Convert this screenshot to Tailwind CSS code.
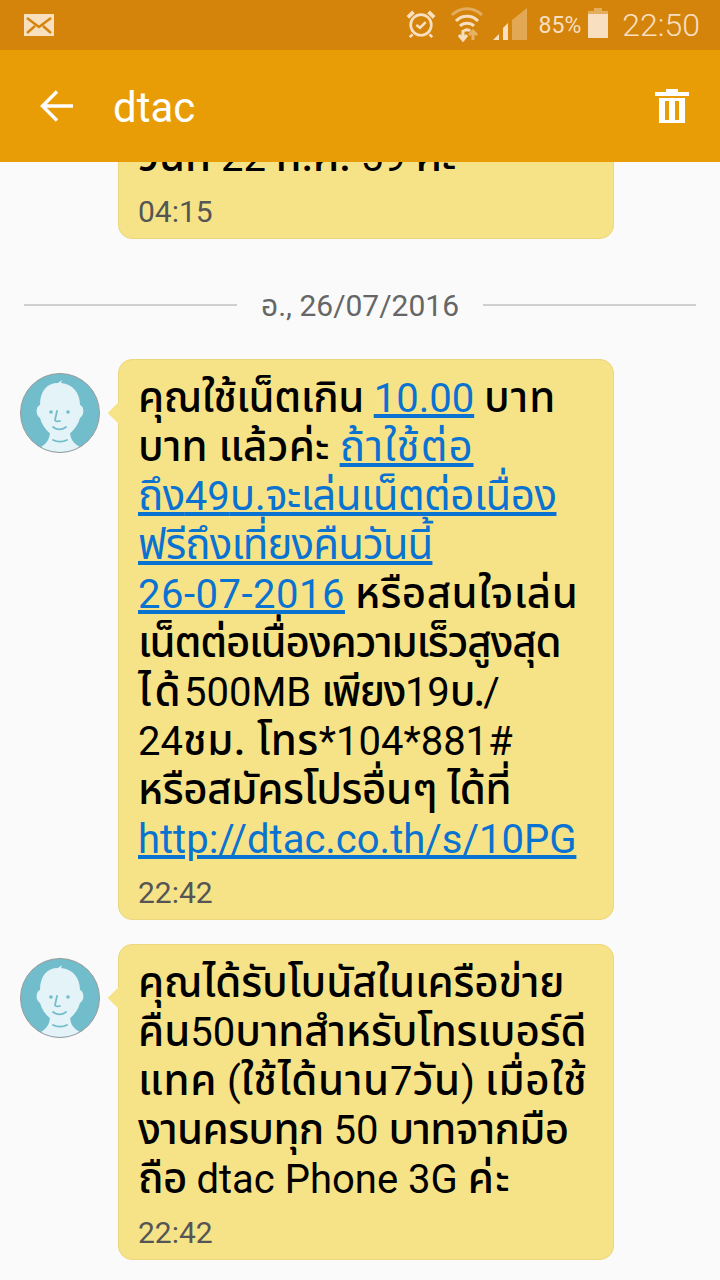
<!DOCTYPE html>
<html lang="th">
<head>
  <meta charset="UTF-8" />
  <meta name="viewport" content="width=device-width, initial-scale=1.0"/>
  <title>dtac</title>
  <script src="https://cdn.jsdelivr.net/npm/@tailwindcss/browser@4"></script>
</head>
<body class="bg-[#fafafa] font-['Roboto','Noto_Sans','Noto_Sans_Thai','Noto_Sans_CJK_SC',sans-serif] w-[720px] h-[1280px] overflow-hidden">

  <!-- Status bar -->
  <div class="h-[50px] bg-[#d4840b] flex items-center pl-[24px] pr-[20px] text-[#f7dfc0]">
    <svg width="30" height="22" viewBox="0 0 30 22"><rect width="30" height="22" fill="#f7dfc0"/><path d="M3 4l12 9 12-9M3 19l8-7M27 19l-8-7" stroke="#d4840b" stroke-width="2.4" fill="none"/></svg>
    <div class="ml-auto flex items-center">
      <svg class="mb-[3px]" width="30" height="30" viewBox="0 0 32 32" fill="none" stroke="#f7dfc0" stroke-width="2.8"><circle cx="16" cy="17" r="11"/><path d="M11 17l4 3 6-6"/><path d="M2 9l6-6M30 9l-6-6" stroke-width="4"/><path d="M7 27l-3 3M25 27l3 3"/></svg>
      <svg class="ml-[14px] mb-[3px]" width="34" height="36" viewBox="0 0 34 36" fill="none"><path d="M2 9a21 21 0 0 1 30 0" stroke="#f7dfc0" stroke-opacity=".45" stroke-width="3"/><path d="M6 15a15 15 0 0 1 22 0M10 20a10 10 0 0 1 14 0" stroke="#f7dfc0" stroke-width="3"/><path d="M14 25a4 4 0 0 1 6 0" stroke="#f7dfc0" stroke-width="3"/><path d="M13 24v8M9 29l4 5 4-5" stroke="#f7dfc0" stroke-width="3"/><path d="M23 34v-8M19 29l4-4 4 4" stroke="#f7dfc0" stroke-opacity=".5" stroke-width="3"/></svg>
      <svg class="ml-[9px] mb-[3px]" width="34" height="32" viewBox="0 0 34 32"><path d="M0 32l6-6v6z" fill="#f7dfc0"/><path d="M10 32v-12l5-5v17z" fill="#f7dfc0"/><path d="M19 32v-20l15-12v32z" fill="#f7dfc0" fill-opacity=".4"/></svg>
      <span class="ml-[12px] text-[23px] leading-none">85%</span>
      <svg class="ml-[7px] mb-[4px]" width="20" height="30" viewBox="0 0 20 30"><path d="M6 0h8v3h6v3H0V3h6z" fill="#f7dfc0" fill-opacity=".45"/><rect y="6" width="20" height="24" fill="#f7dfc0"/></svg>
      <span class="ml-[14px] text-[32px] font-light leading-none">22:50</span>
    </div>
  </div>

  <!-- Toolbar -->
  <header class="relative z-10 h-[112px] bg-[#e89d06] flex items-center text-white pl-[40px] pr-[31px]">
    <svg width="33" height="32" viewBox="0 0 33 32" fill="none" stroke="#fff" stroke-width="3.4"><path d="M33 16H3M17 1.500L2.500 16 17 30.500"/></svg>
    <h1 class="ml-[40px] text-[42px] leading-none pt-[4px]">dtac</h1>
    <svg class="ml-auto mb-[1px]" width="34" height="34" viewBox="0 0 34 34" fill="#fff"><path d="M11 0h12v3h11v4H0V3h11z"/><path d="M4 9h26v25H4zM10 12v19h4V12zM20 12v19h4V12z" fill-rule="evenodd"/></svg>
  </header>

  <!-- Messages -->
  <main class="h-[1118px] overflow-hidden">
    <div class="ml-[118px] w-[496px] -mt-[40px] h-[117px] bg-[#f6e387] border border-[#ecd77c] rounded-[14px] pl-[19px] pt-[10px]">
      <p class="text-[40px] leading-[49px] text-black whitespace-nowrap"><span class="text-[42px] font-medium leading-none">วันที่</span> 22 <span class="text-[42px] font-medium leading-none">ก.ค.</span> 59 <span class="text-[42px] font-medium leading-none">ค่ะ</span></p>
      <p class="mt-[12px] text-[30px] leading-[36px] text-[#555]">04:15</p>
    </div>

    <div class="flex items-center mt-[49px] px-[24px] h-[36px]">
      <div class="flex-1 h-[2px] bg-[#cfcfcf] -mt-[2px]"></div>
      <span class="px-[24px] text-[30px] text-[#666] leading-none">อ., 26/07/2016</span>
      <div class="flex-1 h-[2px] bg-[#cfcfcf] -mt-[2px]"></div>
    </div>

    <div class="flex mt-[35px] pl-[20px]">
      <svg class="mt-[14px]" width="80" height="80" viewBox="0 0 80 80"><defs><clipPath id="a"><circle cx="40" cy="40" r="39"/></clipPath></defs><circle cx="40" cy="40" r="39.500" fill="#72bdcb" stroke="#9a9a9a"/><g clip-path="url(#a)" fill="#e4f3f7"><path d="M30 58C30 66 27 70 21 74L30 82H50L60 74C53 70 50 66 50 58Z"/><path d="M20 32C20 18 27 10 38 10L42 7 41 10C53 11 60 20 60 32 64 33 65 42 60 45 57 56 48 64 40 64 32 64 23 56 20 45 15 42 16 33 20 32Z"/></g><circle cx="31" cy="39" r="1.800" fill="#72bdcb"/><circle cx="48" cy="39" r="1.800" fill="#72bdcb"/><path d="M37 38l-2 9c0 1 2 2 5 1M33 54c4 3 9 3 13 0M33 67c4 2 10 2 14 0" fill="none" stroke="#72bdcb" stroke-width="1.800" stroke-linecap="round"/></svg>
      <div class="relative ml-[18px] w-[496px] h-[561px] bg-[#f6e387] border border-[#ecd77c] rounded-[14px] pl-[19px] pt-[14px]">
        <div class="absolute -left-[8px] top-[45px] w-[16px] h-[16px] rotate-45 bg-[#f6e387]"></div>
        <div class="relative text-[40px] leading-[49px] text-black whitespace-nowrap">
          <p><span class="text-[42px] font-medium leading-none tracking-[-0.5px]">คุณใช้เน็ตเกิน</span> <a class="text-[#0a72d1] underline">10.00</a> <span class="text-[42px] font-medium leading-none tracking-[1px]">บาท</span></p>
          <p><span class="text-[42px] font-medium leading-none tracking-[0.2px]">บาท แล้วค่ะ</span> <a class="text-[#0a72d1] underline"><span class="text-[42px] leading-none tracking-[1px]">ถ้าใช้ต่อ</span></a></p>
          <p><a class="text-[#0a72d1] underline"><span class="text-[42px] leading-none tracking-[-0.5px]">ถึง</span>49<span class="text-[42px] leading-none tracking-[-0.5px]">บ.จะเล่นเน็ตต่อเนื่อง</span></a></p>
          <p><a class="text-[#0a72d1] underline"><span class="text-[42px] leading-none tracking-[-0.9px]">ฟรีถึงเที่ยงคืนวันนี้</span></a></p>
          <p><a class="text-[#0a72d1] underline tracking-[0.5px]">26-07-2016</a> <span class="text-[42px] font-medium leading-none tracking-[0.5px]">หรือสนใจเล่น</span></p>
          <p><span class="text-[42px] font-medium leading-none tracking-[-1.2px]">เน็ตต่อเนื่องความเร็วสูงสุด</span></p>
          <p><span class="text-[42px] font-medium leading-none tracking-[3.5px]">ได้</span>500MB <span class="text-[42px] font-medium leading-none tracking-[-1.6px]">เพียง</span>19<span class="text-[42px] font-medium leading-none tracking-[-2px]">บ.</span>/</p>
          <p>24<span class="text-[42px] font-medium leading-none tracking-[0.5px]">ชม. โทร</span>*104*881#</p>
          <p><span class="text-[42px] font-medium leading-none tracking-[-0.35px]">หรือสมัครโปรอื่นๆ ได้ที่</span></p>
          <p><a class="text-[#0a72d1] underline">http://dtac.co.th/s/10PG</a></p>
        </div>
        <p class="mt-[11px] text-[30px] leading-[36px] text-[#555]">22:42</p>
      </div>
    </div>

    <div class="flex mt-[24px] pl-[20px]">
      <svg class="mt-[14px]" width="80" height="80" viewBox="0 0 80 80"><defs><clipPath id="b"><circle cx="40" cy="40" r="39"/></clipPath></defs><circle cx="40" cy="40" r="39.500" fill="#72bdcb" stroke="#9a9a9a"/><g clip-path="url(#b)" fill="#e4f3f7"><path d="M30 58C30 66 27 70 21 74L30 82H50L60 74C53 70 50 66 50 58Z"/><path d="M20 32C20 18 27 10 38 10L42 7 41 10C53 11 60 20 60 32 64 33 65 42 60 45 57 56 48 64 40 64 32 64 23 56 20 45 15 42 16 33 20 32Z"/></g><circle cx="31" cy="39" r="1.800" fill="#72bdcb"/><circle cx="48" cy="39" r="1.800" fill="#72bdcb"/><path d="M37 38l-2 9c0 1 2 2 5 1M33 54c4 3 9 3 13 0M33 67c4 2 10 2 14 0" fill="none" stroke="#72bdcb" stroke-width="1.800" stroke-linecap="round"/></svg>
      <div class="relative ml-[18px] w-[496px] h-[316px] bg-[#f6e387] border border-[#ecd77c] rounded-[14px] pl-[19px] pt-[14px]">
        <div class="absolute -left-[8px] top-[45px] w-[16px] h-[16px] rotate-45 bg-[#f6e387]"></div>
        <div class="relative text-[40px] leading-[49px] text-black whitespace-nowrap">
          <p><span class="text-[42px] font-medium leading-none tracking-[-0.1px]">คุณได้รับโบนัสในเครือข่าย</span></p>
          <p><span class="text-[42px] font-medium leading-none">คืน</span>50<span class="text-[42px] font-medium leading-none tracking-[-0.1px]">บาทสำหรับโทรเบอร์ดี</span></p>
          <p><span class="text-[42px] font-medium leading-none tracking-[0.7px]">แทค</span> (<span class="text-[42px] font-medium leading-none tracking-[0.7px]">ใช้ได้นาน</span>7<span class="text-[42px] font-medium leading-none tracking-[0.7px]">วัน</span>) <span class="text-[42px] font-medium leading-none tracking-[0.7px]">เมื่อใช้</span></p>
          <p><span class="text-[42px] font-medium leading-none tracking-[-0.65px]">งานครบทุก</span> 50 <span class="text-[42px] font-medium leading-none tracking-[-0.65px]">บาทจากมือ</span></p>
          <p><span class="text-[42px] font-medium leading-none tracking-[-0.7px]">ถือ</span> dtac Phone 3G <span class="text-[42px] font-medium leading-none tracking-[1.5px]">ค่ะ</span></p>
        </div>
        <p class="mt-[11px] text-[30px] leading-[36px] text-[#555]">22:42</p>
      </div>
    </div>
  </main>
</body>
</html>
